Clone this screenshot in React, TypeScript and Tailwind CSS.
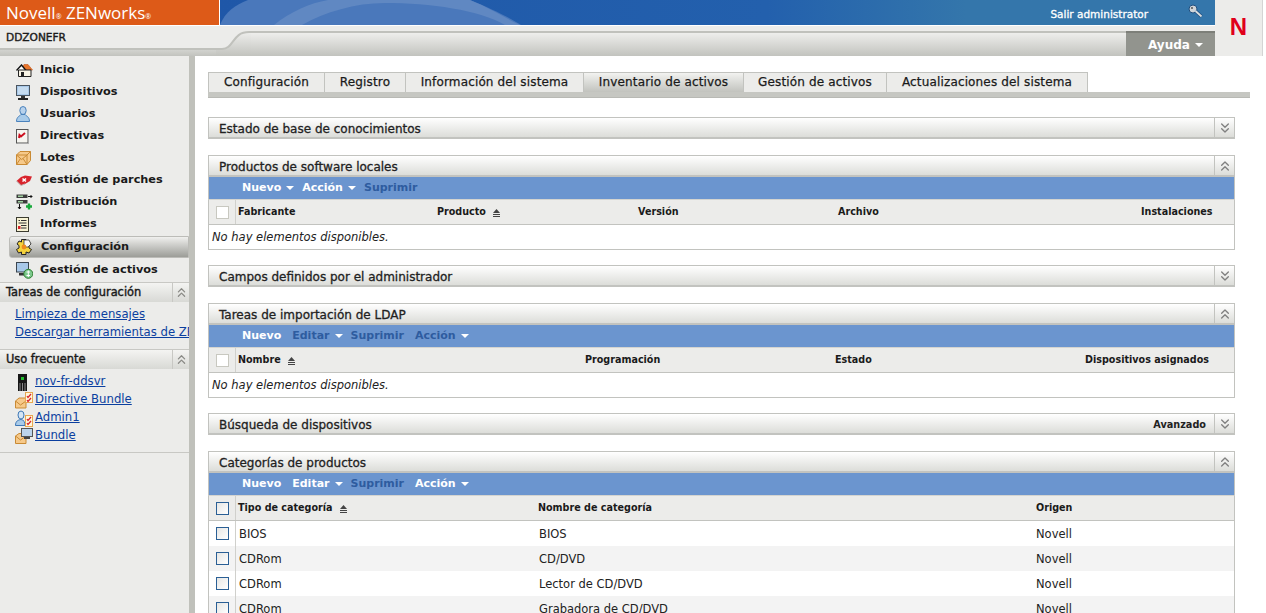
import { ChevronsDown, ChevronsUp } from 'lucide-react';

const font = { fontFamily: '"DejaVu Sans", Verdana, sans-serif' };

const Home = () => (
    <svg width="17" height="13" viewBox="0 0 17 13">
        <path d="M8 0.5 H12 L16.5 6 H5 Z" fill="#e8762c" stroke="#c2561a" strokeWidth="0.6" />
        <path d="M0.5 6.5 L5.5 1 L10 6.5" fill="#fff" stroke="#111" strokeWidth="1.4" />
        <path d="M2.5 6 H15 V12.5 H2.5 Z" fill="#f8f4e6" stroke="#222" />
        <path d="M5 8 H8 V12.5 H5 Z" fill="#222" />
    </svg>
);
const Monitor = () => (
    <svg width="14" height="15" viewBox="0 0 14 15">
        <rect x="0.5" y="0.5" width="13" height="10" fill="#a8c8e8" stroke="#4a5560" />
        <path d="M2 2 H12 V9 H2 Z" fill="#c6dcf0" />
        <rect x="5" y="11" width="4" height="2" fill="#333" />
        <rect x="2" y="13" width="10" height="2" fill="#222" />
    </svg>
);
const User = () => (
    <svg width="14" height="16" viewBox="0 0 14 16">
        <ellipse cx="7" cy="4.5" rx="3.2" ry="4" fill="#b8d2ec" stroke="#4a82bc" />
        <path d="M0.5 15.5 C0.5 10.5 4 10 5 8.5 H9 C10 10 13.5 10.5 13.5 15.5 Z" fill="#a9cbe9" stroke="#4a82bc" />
    </svg>
);
const Directive = () => (
    <svg width="13" height="15" viewBox="0 0 13 15">
        <rect x="0.5" y="0.5" width="11.5" height="13.5" fill="#f6f5f0" stroke="#555" />
        <path d="M12.5 2 V14.5 H2" fill="none" stroke="#aaa" />
        <path d="M3 9 L3.5 6 L5 7.5 L9 4" fill="none" stroke="#cc1020" strokeWidth="2" />
    </svg>
);
const Box = () => (
    <svg width="15" height="14" viewBox="0 0 15 14">
        <path d="M0.5 4 L4 0.5 H14.5 V9.5 L11 13.5 H0.5 Z" fill="#f6c98a" stroke="#c98a34" />
        <path d="M0.5 4 H11 V13.5 M11 4 L14.5 0.5 M0.5 4 L5.7 8.5 L11 4 M0.5 13.5 L4.5 7.5 M11 13.5 L7 7.5" fill="none" stroke="#c98a34" />
    </svg>
);
const Patch = () => (
    <svg width="17" height="11" viewBox="0 0 17 11">
        <path d="M0.5 6 L5 2 L9 0.5 L16 1.5 L14 6 L9 9 L5 10.5 Z" fill="#d8242c" />
        <path d="M0.5 6 L5 10.5 L9 9" fill="none" stroke="#bbb" />
        <path d="M6.5 3.5 L10 6.5 M10 3.5 L6.5 6.5" stroke="#fff" strokeWidth="1.6" />
    </svg>
);
const Distribution = () => (
    <svg width="17" height="16" viewBox="0 0 17 16">
        <rect x="0.5" y="0.5" width="11" height="3.5" fill="#3c3c3c" />
        <rect x="2" y="1.5" width="5" height="1.5" fill="#9fd09f" />
        <rect x="0.5" y="6" width="11" height="3.5" fill="#3c3c3c" />
        <rect x="2" y="7" width="5" height="1.5" fill="#9fd09f" />
        <path d="M3.5 10 V15 M2 13 L3.5 15 L5 13" fill="none" stroke="#111" />
        <path d="M12 2.5 H16 M14.5 1 L16 2.5 L14.5 4" fill="none" stroke="#111" />
        <path d="M10 12.5 H16 M13 9.5 V15.5" stroke="#16a83a" strokeWidth="2.4" />
    </svg>
);
const Report = () => (
    <svg width="13" height="15" viewBox="0 0 13 15">
        <rect x="0.5" y="0.5" width="12" height="14" fill="#f8f3d4" stroke="#3c3c30" />
        <path d="M5 3.5 H10.5 M2.5 6 H10.5 M5 8.5 H10.5 M5 11 H10.5 M2.5 3.5 H4" stroke="#333" />
        <rect x="2" y="9" width="2.5" height="3" fill="#d8242c" />
    </svg>
);
const Gear = () => (
    <svg width="16" height="16" viewBox="0 0 16 16">
        <path d="M5.5 0.5 H10 V3 L12.5 2 L15 5 L13 6.5 V9 L15.5 10.5 L13 14 L10 13 V15.5 H5.5 V13 L2.5 14 L0.5 10.5 L3 9 V6.5 L1 5 L3 2 L5.5 3 Z" fill="#f4d23c" stroke="#222" />
        <path d="M8 1 H13 L15 5 L12 8 H8 Z" fill="#f8f8f4" stroke="#222" strokeWidth="0.7" />
        <circle cx="8" cy="8" r="2.4" fill="#ef8a1c" />
    </svg>
);
const Asset = () => (
    <svg width="17" height="17" viewBox="0 0 17 17">
        <rect x="0.5" y="0.5" width="12" height="9.5" fill="#a8c8e8" stroke="#3c4650" />
        <rect x="3" y="11" width="6" height="2.5" fill="#333" />
        <circle cx="12.3" cy="11.8" r="4.5" fill="#7cc88c" stroke="#2f7f33" />
        <path d="M12.3 8.5 V15 M10.5 10 H14 M10.5 13.5 H14" stroke="#fff" />
    </svg>
);
const Server = () => (
    <svg width="9" height="17" viewBox="0 0 9 17">
        <rect x="0" y="0" width="9" height="17" fill="#161616" />
        <rect x="3" y="3" width="3" height="3" fill="#22c02e" />
        <path d="M2 9 V17 M4.5 9 V17 M7 9 V17" stroke="#888" />
    </svg>
);
const DirectiveBundle = () => (
    <svg width="18" height="17" viewBox="0 0 18 17">
        <path d="M0.5 9 L4 6 H11 V16 H0.5 Z" fill="#f6c98a" stroke="#c98a34" />
        <path d="M0.5 9 L5.5 13 L11 9" fill="none" stroke="#c98a34" />
        <rect x="10.5" y="0.5" width="7" height="10" fill="#fff8dc" stroke="#e8a850" />
        <path d="M12 4 L13 5.5 L16 2 M12 8 L13 9.5 L16 6" fill="none" stroke="#d8242c" strokeWidth="1.3" />
    </svg>
);
const AdminIcon = () => (
    <svg width="18" height="17" viewBox="0 0 18 17">
        <ellipse cx="6" cy="5" rx="3" ry="4" fill="#d6e6f5" stroke="#3f78b5" />
        <path d="M0.5 15.5 C0.5 11 3 10 6 9.5 C9 10 10 12 10 15.5 Z" fill="#a9cbe9" stroke="#3f78b5" />
        <rect x="10.5" y="5.5" width="7" height="11" fill="#fff8dc" stroke="#e8a850" />
        <path d="M12 9 L13 10.5 L16 7 M12 13 L13 14.5 L16 11" fill="none" stroke="#d8242c" strokeWidth="1.3" />
    </svg>
);
const BundleIcon = () => (
    <svg width="18" height="16" viewBox="0 0 18 16">
        <path d="M0.5 8 L4 5.5 H11 V15.5 H0.5 Z" fill="#f6c98a" stroke="#c98a34" />
        <path d="M0.5 8 L5.5 12 L11 8" fill="none" stroke="#c98a34" />
        <rect x="6.5" y="0.5" width="11" height="8" fill="#bcd4ec" stroke="#555" />
        <rect x="9" y="9" width="6" height="2" fill="#444" />
    </svg>
);
const Key = () => (
    <svg width="15" height="14" viewBox="0 0 15 14">
        <circle cx="5" cy="5" r="4" fill="#cfd4d8" stroke="#1f4f80" />
        <circle cx="4" cy="4" r="1" fill="#555" />
        <path d="M7.5 7 L13.5 12.5" stroke="#1f4f80" strokeWidth="3.4" />
        <path d="M7.5 7 L13.5 12.5" stroke="#dcdfe0" strokeWidth="1.8" />
    </svg>
);

const navItems = [
    { label: 'Inicio', icon: <Home /> },
    { label: 'Dispositivos', icon: <Monitor /> },
    { label: 'Usuarios', icon: <User /> },
    { label: 'Directivas', icon: <Directive /> },
    { label: 'Lotes', icon: <Box /> },
    { label: 'Gestión de parches', icon: <Patch /> },
    { label: 'Distribución', icon: <Distribution /> },
    { label: 'Informes', icon: <Report /> },
];

const Caret = () => (
    <span className="inline-block ml-[5px] mb-[1px] w-0 h-0 border-x-[4px] border-x-transparent border-t-[4px] border-t-white" />
);

const SortUp = () => (
    <svg width="9" height="8" viewBox="0 0 9 8" className="ml-[6px] mt-[2px]">
        <path d="M4.5 0 L8 4 H1 Z" fill="#444" />
        <path d="M1 5.5 H8 M1 7.5 H8" stroke="#444" />
    </svg>
);

const SideHeader = ({ title }: { title: string }) => (
    <div className="h-[20px] flex border-t border-[#c8c8c4] bg-gradient-to-b from-[#f4f4f2] to-[#d8d9d5]">
        <div className="flex-1 pl-[6px] text-[11.4px] [-webkit-text-stroke:0.4px_#1a1a1a] leading-[19px] text-[#1a1a1a] whitespace-nowrap">{title}</div>
        <div className="w-[17px] border-l border-[#c8c8c4] flex items-center justify-center">
            <ChevronsUp size={15} color="#8a8a86" />
        </div>
    </div>
);

const PanelHeader = ({ title, open, right }: { title: string; open?: boolean; right?: string }) => (
    <div className="h-[22px] flex border-x border-t border-[#c2c3bf] border-b-2 bg-gradient-to-b from-white to-[#dcddd9]">
        <div className="flex-1 pl-[10px] text-[12px] [-webkit-text-stroke:0.3px_#222] leading-[22px] text-[#222]">{title}</div>
        {right && <div className="pr-[8px] text-[9.7px] font-bold leading-[22px] text-[#222]">{right}</div>}
        <div className="w-[20px] border-l border-[#c2c3bf] flex items-center justify-center">
            {open ? <ChevronsUp size={16} color="#808080" /> : <ChevronsDown size={16} color="#808080" />}
        </div>
    </div>
);

const Toolbar = ({ items }: { items: { label: string; off?: boolean; caret?: boolean }[] }) => (
    <div className="h-[22px] bg-[#6b95cf] border-x border-[#c2c3bf] flex items-center pl-[33px] pt-[1px] text-[11px] font-bold">
        {items.map( ( item ) => (
            <span
                key={item.label}
                className={`flex items-center ${item.off ? 'text-[#2e5c9f]' : 'text-white'} ${item.caret ? 'mr-[8px]' : 'mr-[11px]'}`}
            >
                {item.label}
                {item.caret && <Caret />}
            </span>
        ) )}
    </div>
);

const Check = ({ active }: { active?: boolean }) => (
    <span
        className={`block w-[13px] h-[13px] border bg-gradient-to-br ${
            active ? 'border-[#2a5f95] from-[#e6e6e4] to-white' : 'border-[#c8c8c0] from-white to-white'
        }`}
    />
);

const HeadRow = ( { cols, active }: { cols: { label: string; w: number; sort?: boolean }[]; active?: boolean } ) => (
    <div className="h-[26px] flex items-center bg-[#ececea] border-x border-b border-[#c2c3bf] border-t border-t-[#d4d4d0]">
        <div className="w-[27px] h-full flex items-center justify-center border-r border-[#d0d0cc] shrink-0">
            <Check active={active} />
        </div>
        {cols.map( ( col ) => (
            <div
                key={col.label}
                className="flex items-center pl-[2px] pt-[1px] text-[9.6px] font-bold text-[#1a1a1a] whitespace-nowrap"
                style={{ width: col.w }}
            >
                {col.label}
                {col.sort && <SortUp />}
            </div>
        ) )}
    </div>
);

const EmptyRow = () => (
    <div className="h-[25px] border-x border-b border-[#c2c3bf] pl-[3px] text-[11.5px] italic leading-[24px] text-[#222]">
        No hay elementos disponibles.
    </div>
);

const rows = [
    { type: 'BIOS', name: 'BIOS' },
    { type: 'CDRom', name: 'CD/DVD' },
    { type: 'CDRom', name: 'Lector de CD/DVD' },
    { type: 'CDRom', name: 'Grabadora de CD/DVD' },
];

const tabs = ['Configuración', 'Registro', 'Información del sistema', 'Inventario de activos', 'Gestión de activos', 'Actualizaciones del sistema'];
const tabWidths = [117, 81, 178, 160, 143, 201];

export default function App() {
    return (
        <div className="w-[1266px] h-[613px] overflow-hidden bg-white flex flex-col" style={font}>
            <div className="flex h-[56px] shrink-0">
                <div className="flex-1 flex flex-col">
                    <div className="h-[25px] flex">
                        <div className="w-[219px] bg-[#dd5a18] pl-[6px] text-white text-[17px] leading-[25px] whitespace-nowrap" style={{ fontFamily: '"Open Sans", sans-serif' }}>
                            Novell<span className="text-[7px]">®</span> ZENworks<span className="text-[7px]">®</span>
                        </div>
                        <div className="w-px bg-white" />
                        <div className="relative flex-1 bg-gradient-to-r from-[#1f57a8] via-[#2360ad] via-55% to-[#3476ab] to-75% flex items-center justify-end text-white text-[10.5px] [-webkit-text-stroke:0.3px_#fff]">
                            <svg width="320" height="25" viewBox="0 0 320 25" className="absolute left-0 top-0">
                                <path d="M0 25 C5 12 15 5 28 0 H250 C270 8 290 18 301 25 Z" fill="#4a78bb" />
                                <path d="M54 25 C70 12 90 3 108 0 H250 C270 8 285 18 300 25 H285 C260 10 210 3 165 3 C135 3 105 12 82 25 Z" fill="#6088c2" />
                            </svg>
                            <span className="mr-[40px] mt-[4px]">Salir administrator</span>
                            <span className="mr-[12px] mb-[4px]"><Key /></span>
                        </div>
                    </div>
                    <div className="h-[31px] flex bg-[#ececea] border-t border-white">
                        <div className="w-[216px] flex flex-col">
                            <div className="h-[22px] pl-[6px] text-[10.6px] [-webkit-text-stroke:0.4px_#1a1a1a] leading-[22px] text-[#1a1a1a]">DDZONEFR</div>
                            <div className="flex-1 border-t-2 border-[#c0c1bc] bg-gradient-to-b from-[#d2d3cf] to-[#c2c3be]" />
                        </div>
                        <svg width="35" height="30" viewBox="0 0 35 30" className="shrink-0">
                            <defs>
                                <linearGradient id="curveFill" gradientUnits="userSpaceOnUse" x1="0" y1="6" x2="0" y2="30">
                                    <stop offset="0" stopColor="#eeeeec" />
                                    <stop offset="1" stopColor="#c2c3be" />
                                </linearGradient>
                            </defs>
                            <path d="M0 23 H6 C18 23 16 6 33 6 H35 V30 H0 Z" fill="url(#curveFill)" />
                            <path d="M0 23 H6 C18 23 16 6 33 6 H35" fill="none" stroke="#c0c1bc" strokeWidth="2" />
                        </svg>
                        <div className="flex-1 mt-[5px] bg-gradient-to-b from-[#eeeeec] to-[#c2c3be] border-t-2 border-[#c0c1bc]" />
                        <div className="w-[89px] mt-[5px] pt-[1px] bg-[#92948e] border-t-2 border-[#7d7f79] text-white text-[12px] font-bold flex items-center pl-[22px]">
                            Ayuda
                            <Caret />
                        </div>
                    </div>
                </div>
                <div className="w-[47px] bg-[#ececea] flex justify-center pt-[16px]">
                    <span className="text-[#e0001b] text-[24px] leading-[22px] font-bold" style={{ fontFamily: '"Liberation Sans", sans-serif' }}>N</span>
                </div>
                <div className="w-[4px] border-l border-[#d4d4d4]" />
            </div>

            <div className="flex flex-1 min-h-0">
                <aside className="w-[195px] shrink-0 bg-[#ececea] border-r-[6px] border-[#c0c1bb] overflow-hidden">
                    <div className="pt-[3px]">
                        {navItems.map( ( item ) => (
                            <div key={item.label} className="h-[22px] flex items-center text-[11.3px] font-bold text-[#1a1a1a]">
                                <span className="w-[40px] pl-[16px] flex justify-start">{item.icon}</span>
                                {item.label}
                            </div>
                        ) )}
                        <div className="h-[22px] mt-[1px] ml-[9px] flex items-center rounded-l-[3px] border border-[#bcbcb8] bg-gradient-to-b from-[#f0f0ee] to-[#9c9d98] text-[11.3px] font-bold text-[#1a1a1a]">
                            <span className="w-[31px] pl-[6px]"><Gear /></span>
                            Configuración
                        </div>
                        <div className="h-[24px] flex items-center text-[11.3px] font-bold text-[#1a1a1a]">
                            <span className="w-[40px] pl-[16px]"><Asset /></span>
                            Gestión de activos
                        </div>
                    </div>
                    <SideHeader title="Tareas de configuración" />
                    <div className="pl-[15px] pt-[3px] pb-[8px] text-[11.7px] leading-[18px] text-[#0b3f9f] whitespace-nowrap overflow-hidden">
                        <div><span className="underline">Limpieza de mensajes</span></div>
                        <div><span className="underline">Descargar herramientas de ZE</span></div>
                    </div>
                    <SideHeader title="Uso frecuente" />
                    <div className="pt-[4px] pb-[7px] border-b border-[#c8c8c4] text-[11.7px] text-[#0b3f9f]">
                        <div className="h-[18px] flex items-center"><span className="w-[35px] pl-[18px]"><Server /></span><span className="underline">nov-fr-ddsvr</span></div>
                        <div className="h-[18px] flex items-center"><span className="w-[35px] pl-[15px]"><DirectiveBundle /></span><span className="underline">Directive Bundle</span></div>
                        <div className="h-[18px] flex items-center"><span className="w-[35px] pl-[15px]"><AdminIcon /></span><span className="underline">Admin1</span></div>
                        <div className="h-[18px] flex items-center"><span className="w-[35px] pl-[15px]"><BundleIcon /></span><span className="underline">Bundle</span></div>
                    </div>
                </aside>

                <main className="flex-1 min-w-0 pl-[13px] pt-[16px] overflow-hidden">
                    <div className="w-[1042px]">
                        <div className="flex h-[20px]">
                            {tabs.map( ( tab, i ) => (
                                <div
                                    key={tab}
                                    className={`flex items-center justify-center pb-[1px] border-t border-r border-[#c2c3bf] text-[12px] [-webkit-text-stroke:0.25px_#1a1a1a] text-[#1a1a1a] tracking-[0.15px] whitespace-nowrap ${
                                        i === 0 ? 'border-l' : ''
                                    } ${i === 3 ? 'bg-gradient-to-b from-[#f2f2f0] to-[#c2c3be]' : 'bg-[#ececea]'}`}
                                    style={{ width: tabWidths[i] }}
                                >
                                    {tab}
                                </div>
                            ) )}
                        </div>
                        <div className="h-[6px] bg-[#c6c7c2] border-b border-[#b8b9b4]" />
                    </div>

                    <div className="w-[1027px] pt-[19px] flex flex-col">
                        <PanelHeader title="Estado de base de conocimientos" />

                        <div className="mt-[16px]">
                            <PanelHeader title="Productos de software locales" open />
                            <Toolbar items={[{ label: 'Nuevo', caret: true }, { label: 'Acción', caret: true }, { label: 'Suprimir', off: true }]} />
                            <HeadRow cols={[
                                { label: 'Fabricante', w: 199 },
                                { label: 'Producto', w: 201, sort: true },
                                { label: 'Versión', w: 200 },
                                { label: 'Archivo', w: 303 },
                                { label: 'Instalaciones', w: 90 },
                            ]} />
                            <EmptyRow />
                        </div>

                        <div className="mt-[15px]"><PanelHeader title="Campos definidos por el administrador" /></div>

                        <div className="mt-[16px]">
                            <PanelHeader title="Tareas de importación de LDAP" open />
                            <Toolbar items={[{ label: 'Nuevo' }, { label: 'Editar', off: true, caret: true }, { label: 'Suprimir', off: true }, { label: 'Acción', off: true, caret: true }]} />
                            <HeadRow cols={[
                                { label: 'Nombre', w: 347, sort: true },
                                { label: 'Programación', w: 250 },
                                { label: 'Estado', w: 250 },
                                { label: 'Dispositivos asignados', w: 150 },
                            ]} />
                            <EmptyRow />
                        </div>

                        <div className="mt-[15px]"><PanelHeader title="Búsqueda de dispositivos" right="Avanzado" /></div>

                        <div className="mt-[16px]">
                            <PanelHeader title="Categorías de productos" open />
                            <Toolbar items={[{ label: 'Nuevo' }, { label: 'Editar', caret: true }, { label: 'Suprimir', off: true }, { label: 'Acción', caret: true }]} />
                            <HeadRow active cols={[
                                { label: 'Tipo de categoría', w: 300, sort: true },
                                { label: 'Nombre de categoría', w: 498 },
                                { label: 'Origen', w: 150 },
                            ]} />
                            {rows.map( ( row, i ) => (
                                <div key={row.name} className={`h-[25px] flex items-center border-x border-[#c2c3bf] text-[11.5px] text-[#222] ${i % 2 ? 'bg-[#f3f3f3]' : 'bg-white'}`}>
                                    <div className="w-[27px] h-full flex items-center justify-center border-r border-[#d0d0cc] shrink-0"><Check active /></div>
                                    <div className="w-[300px] pl-[3px] pt-[2px]">{row.type}</div>
                                    <div className="w-[498px] pl-[3px] pt-[2px]">{row.name}</div>
                                    <div className="pl-[2px] pt-[2px]">Novell</div>
                                </div>
                            ) )}
                        </div>
                    </div>
                </main>
            </div>
        </div>
    );
}
